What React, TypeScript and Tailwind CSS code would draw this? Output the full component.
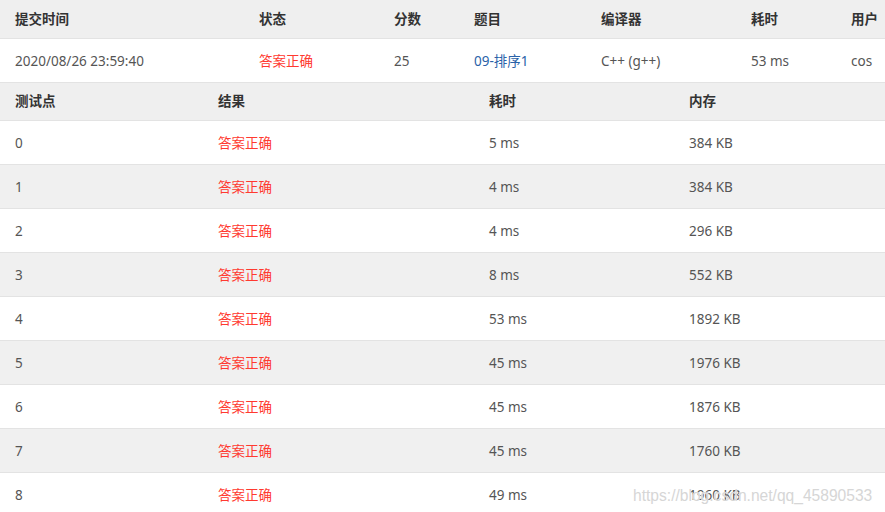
import React from "react"

const font = { fontFamily: '"Noto Sans", "Noto Sans CJK SC", sans-serif' }

const tests = [
    ["0", "5 ms", "384 KB"],
    ["1", "4 ms", "384 KB"],
    ["2", "4 ms", "296 KB"],
    ["3", "8 ms", "552 KB"],
    ["4", "53 ms", "1892 KB"],
    ["5", "45 ms", "1976 KB"],
    ["6", "45 ms", "1876 KB"],
    ["7", "45 ms", "1760 KB"],
    ["8", "49 ms", "1960 KB"],
]

const topCols = "grid grid-cols-[244px_135px_80px_127px_150px_100px_1fr]"
const testCols = "grid grid-cols-[203px_271px_200px_1fr]"

export default function App() {
    return (
        <div className="relative w-[885px] h-[512px] overflow-hidden bg-white text-[13.5px] text-[#555]" style={font}>
            {/* submission summary */}
            <div className={`${topCols} h-[39px] items-center bg-[#efefef] border-b border-[#e3e3e3] font-bold text-[#333]`}>
                <div className="pl-[15px]">提交时间</div>
                <div className="pl-[15px]">状态</div>
                <div className="pl-[15px]">分数</div>
                <div className="pl-[15px]">题目</div>
                <div className="pl-[15px]">编译器</div>
                <div className="pl-[15px]">耗时</div>
                <div className="pl-[15px]">用户</div>
            </div>
            <div className={`${topCols} h-[44px] pt-[2px] items-center border-b border-[#e3e3e3]`}>
                <div className="pl-[15px]">2020/08/26 23:59:40</div>
                <div className="pl-[15px] text-[#ff3a30]">答案正确</div>
                <div className="pl-[15px]">25</div>
                <div className="pl-[15px] text-[#2a62a8]">09-排序1</div>
                <div className="pl-[15px]">C++ (g++)</div>
                <div className="pl-[15px]">53 ms</div>
                <div className="pl-[15px]">cos</div>
            </div>

            {/* test points */}
            <div className={`${testCols} h-[38px] items-center bg-[#efefef] border-b border-[#e3e3e3] font-bold text-[#333]`}>
                <div className="pl-[15px]">测试点</div>
                <div className="pl-[15px]">结果</div>
                <div className="pl-[15px]">耗时</div>
                <div className="pl-[15px]">内存</div>
            </div>
            {tests.map(([id, time, mem], i) => (
                <div
                    key={id}
                    className={`${testCols} h-[44px] pt-[2px] items-center border-b border-[#e3e3e3] ${i % 2 === 1 ? "bg-[#f0f0f0]" : "bg-white"}`}
                >
                    <div className="pl-[15px]">{id}</div>
                    <div className="pl-[15px] text-[#ff3a30]">答案正确</div>
                    <div className="pl-[15px]">{time}</div>
                    <div className="pl-[15px]">{mem}</div>
                </div>
            ))}

            {/* watermark */}
            <div
                className="absolute left-[633px] top-[484px] text-[15.6px] text-[#d6d6d6] whitespace-nowrap"
                style={{ fontFamily: '"Liberation Sans", Arial, sans-serif', textShadow: "0 0 1px #fff" }}
            >
                https://blog.csdn.net/qq_45890533
            </div>
        </div>
    )
}
